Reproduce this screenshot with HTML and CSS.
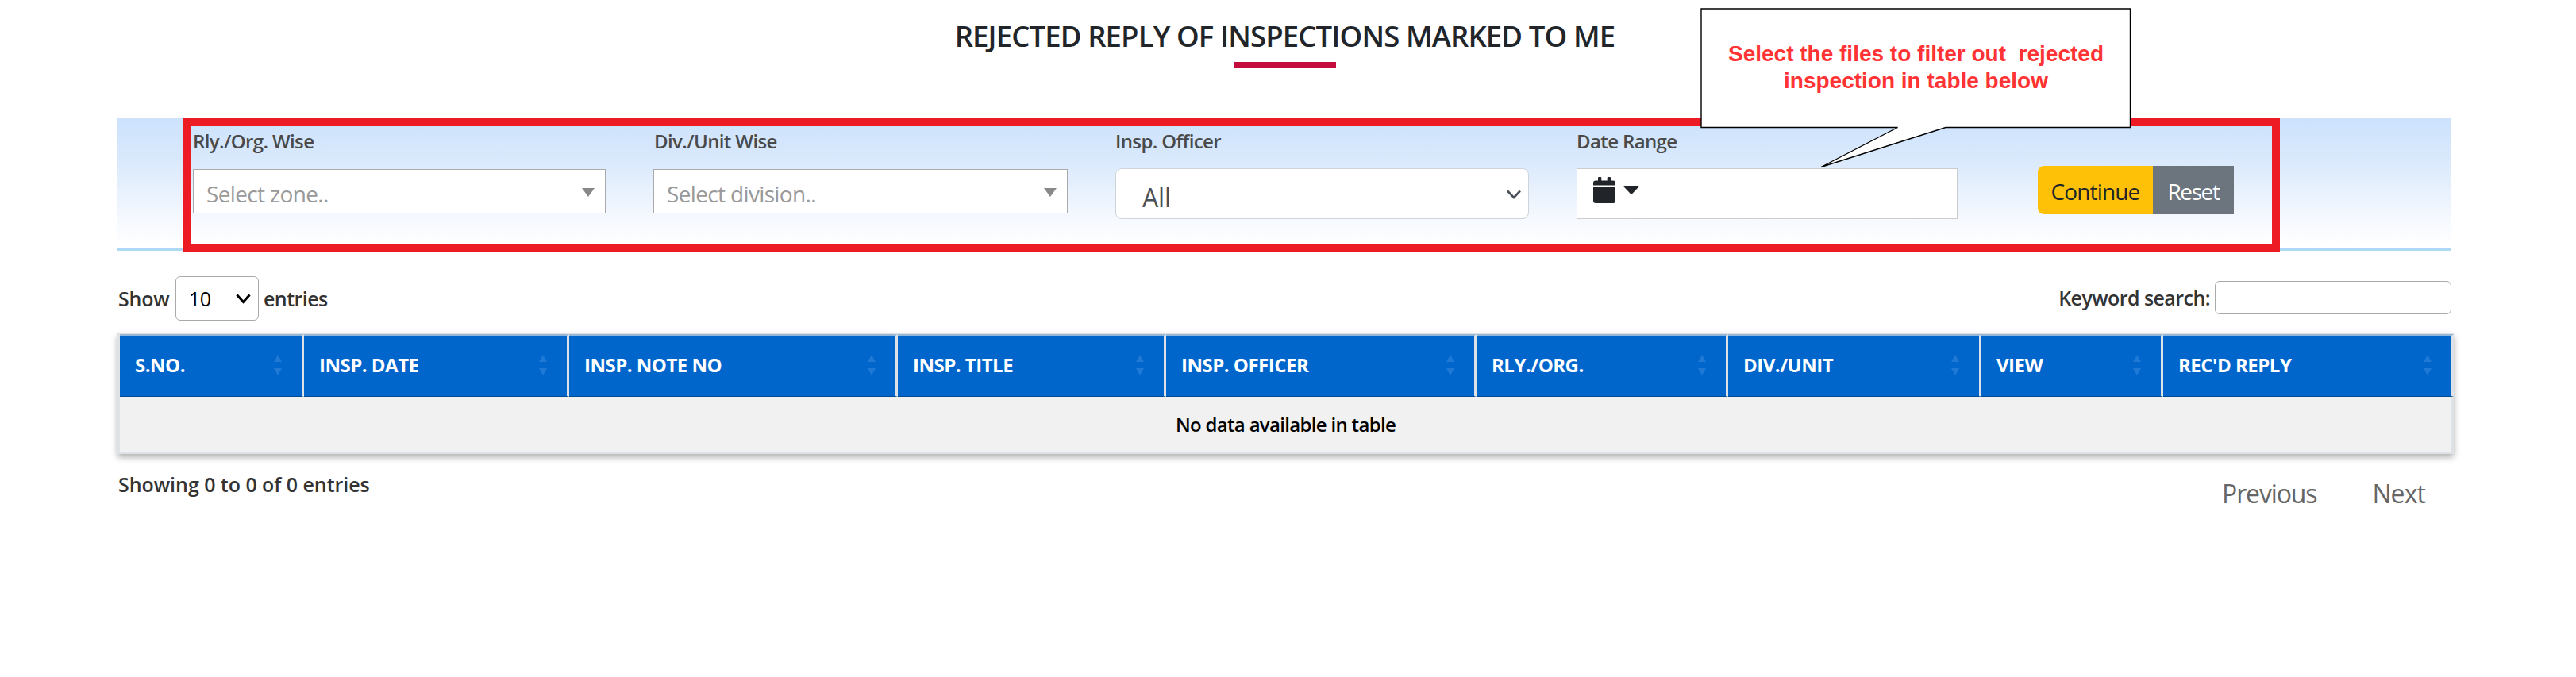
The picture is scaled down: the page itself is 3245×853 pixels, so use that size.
FILE: index.html
```html
<!DOCTYPE html>
<html lang="en">
<head>
<meta charset="utf-8">
<title>Rejected Reply of Inspections</title>
<link rel="stylesheet" href="styles.css">
</head>
<body>
<main class="page">
  <header class="page-head">
    <h1 class="title">REJECTED REPLY OF INSPECTIONS MARKED TO ME</h1>
    <div class="title-rule"></div>
  </header>

  <section class="filters">
    <div class="field">
      <div class="label">Rly./Org. Wise</div>
      <div class="combo"><span>Select zone..</span><svg class="tri" width="16" height="11" viewBox="0 0 16 11"><path d="M0 0h16L8 11z" fill="#888"/></svg></div>
    </div>
    <div class="field">
      <div class="label">Div./Unit Wise</div>
      <div class="combo combo-wide"><span>Select division..</span><svg class="tri" width="16" height="11" viewBox="0 0 16 11"><path d="M0 0h16L8 11z" fill="#888"/></svg></div>
    </div>
    <div class="field">
      <div class="label">Insp. Officer</div>
      <div class="select"><span>All</span><svg width="18" height="12" viewBox="0 0 18 12"><path d="M1 1.5l8 8.5 8-8.5" fill="none" stroke="#495057" stroke-width="2.6"/></svg></div>
    </div>
    <div class="field">
      <div class="label">Date Range</div>
      <div class="date">
        <svg width="28" height="33" viewBox="0 0 28 33"><path fill="#212529" d="M0 10.5V7.500Q0 4.500 3 4.500H6V1Q6 0 7 0H9.300Q10.300 0 10.300 1V4.500H17.700V1Q17.700 0 18.700 0H21Q22 0 22 1V4.500H25Q28 4.500 28 7.500V10.500ZM0 12.500H28V30Q28 33 25 33H3Q0 33 0 30Z"/></svg>
        <svg class="caret" width="20" height="11" viewBox="0 0 20 11"><path d="M1.500 0h17q1.500 0 .8 1.500L11 10.300q-1 1-2 0L.7 1.500Q0 0 1.500 0z" fill="#212529"/></svg>
      </div>
    </div>
    <div class="actions">
      <button class="btn btn-go" type="button">Continue</button><button class="btn btn-reset" type="button">Reset</button>
    </div>
  </section>

  <section class="tools">
    <div class="length">
      <span class="show">Show</span>
      <div class="length-box"><span>10</span><svg width="19" height="13" viewBox="0 0 19 13"><path d="M1.500 1.500l8 9 8-9" fill="none" stroke="#000" stroke-width="3"/></svg></div>
      <span>entries</span>
    </div>
    <div class="search"><span>Keyword search:</span><div class="search-box"></div></div>
  </section>

  <table class="grid">
    <colgroup><col class="c1"><col class="c2"><col class="c3"><col class="c4"><col class="c5"><col class="c6"><col class="c7"><col class="c8"><col class="c9"></colgroup>
    <thead>
      <tr>
        <th><div class="th"><span>S.NO.</span><i class="sort"></i></div></th>
        <th><div class="th"><span>INSP. DATE</span><i class="sort"></i></div></th>
        <th><div class="th"><span>INSP. NOTE NO</span><i class="sort"></i></div></th>
        <th><div class="th"><span>INSP. TITLE</span><i class="sort"></i></div></th>
        <th><div class="th"><span>INSP. OFFICER</span><i class="sort"></i></div></th>
        <th><div class="th"><span>RLY./ORG.</span><i class="sort"></i></div></th>
        <th><div class="th"><span>DIV./UNIT</span><i class="sort"></i></div></th>
        <th><div class="th"><span>VIEW</span><i class="sort"></i></div></th>
        <th><div class="th"><span>REC'D REPLY</span><i class="sort"></i></div></th>
      </tr>
    </thead>
    <tbody><tr><td colspan="9">No data available in table</td></tr></tbody>
  </table>

  <footer class="foot">
    <div class="info">Showing 0 to 0 of 0 entries</div>
    <nav class="pager"><span class="prev">Previous</span><span class="next">Next</span></nav>
  </footer>
</main>

<div class="frame"></div>
<div class="callout">
  <svg class="callout-shape" width="543" height="204" viewBox="0 0 543 204"><path d="M1 1H541.500V150.500H309L152 200.500 248.500 150.500H1Z" fill="#fff" stroke="#000" stroke-width="1.400"/></svg>
  <p class="callout-text">Select the files to filter out&nbsp; rejected<br>inspection in table below</p>
</div>
</body>
</html>
```

FILE: styles.css
```css
* { box-sizing: border-box; }
body {
  margin: 0;
  background: #fff;
  font-family: "Open Sans", "Noto Sans", sans-serif;
  color: #212529;
}
svg { display: block; }
.page { width: 2943px; margin-left: 148px; }

.page-head { height: 149px; padding: 20px 2px 0 0; text-align: center; }
.title { margin: 0; font-size: 36.5px; line-height: 50px; font-weight: 550; letter-spacing: -.87px; }
.title-rule { width: 128px; height: 8px; margin: 8px auto 0; background: #c40d3c; }

.filters {
  display: grid;
  grid-template-columns: repeat(4, 581px) 1fr;
  width: 2940px;
  height: 167px;
  padding: 12px 0 0 95px;
  border-bottom: 4px solid #afd7f6;
  background: linear-gradient(#cce2fd 0%, #dbeafc 35%, #f1f6fe 70%, #fff 98%);
}
.label { font-size: 24px; line-height: 34px; font-weight: 600; letter-spacing: -.62px; color: #4a4a4a; margin-bottom: 17px; }
.combo {
  display: flex;
  justify-content: space-between;
  width: 520px;
  height: 56px;
  margin-top: 18px;
  padding: 12px 13px 0 16px;
  border: 1.500px solid #aaa;
  background: #fff;
  color: #999;
  font-size: 28px;
  line-height: 36px;
  letter-spacing: -.65px;
}
.combo-wide { width: 522px; margin-left: -1px; }
.tri { margin-top: 11px; }
.select {
  display: flex;
  justify-content: space-between;
  width: 521px;
  height: 64px;
  padding: 13px 9px 0 33px;
  border: 1px solid #ced4da;
  border-radius: 8px;
  background: #fff;
  color: #495057;
  font-size: 32px;
  line-height: 46px;
  letter-spacing: -.2px;
}
.select svg { margin-top: 13px; }
.date { display: flex; width: 480px; height: 64px; padding: 10px 20px; border: 1.500px solid #ccc; background: #fff; }
.caret { margin: 11px 0 0 10px; }
.actions { display: flex; padding-top: 48px; }
.btn {
  height: 61px;
  padding: 3px 0 0;
  border: 0;
  font: 400 28px/40px "Open Sans", "Noto Sans", sans-serif;
}
.btn-go { width: 145px; border-radius: 8px 0 0 8px; background: #ffc107; color: #212529; letter-spacing: -.86px; }
.btn-reset { width: 102px; background: #6c757d; color: #fff; letter-spacing: -1.400px; }

.tools {
  display: flex;
  justify-content: space-between;
  width: 2940px;
  height: 104px;
  padding-top: 32px;
  color: #333;
  font-size: 25px;
  line-height: 36px;
  font-weight: 600;
  letter-spacing: -.56px;
}
.length { display: flex; align-items: center; height: 56px; }
.show { width: 73px; padding-left: 1px; letter-spacing: -.2px; }
.length-box {
  display: flex;
  align-items: center;
  justify-content: space-between;
  width: 105px;
  height: 56px;
  margin-right: 6px;
  padding: 0 9px 0 16px;
  border: 1.500px solid #aaa;
  border-radius: 6px;
  color: #000;
  font-weight: 400;
}
.search { display: flex; align-items: center; gap: 6px; height: 42px; margin-top: 6px; }
.search-box { width: 298px; height: 42px; border: 1.500px solid #aaa; border-radius: 6px; }

.grid {
  table-layout: fixed;
  width: 2943px;
  border-collapse: separate;
  border-spacing: 0;
  border: solid #dee2e6;
  border-width: 1px 0 2px 3px;
  box-shadow: 0 4px 8px rgba(0, 0, 0, .32);
}
.c1 { width: 232px; } .c2 { width: 334px; } .c3 { width: 414px; } .c4 { width: 338px; }
.c5 { width: 391px; } .c6 { width: 317px; } .c7 { width: 319px; } .c8 { width: 229px; } .c9 { width: 366px; }
th { height: 79px; padding: 0 0 2px; background: #0066cc; border-top: 2px solid #94b7d8; border-bottom: 1px solid #004a94; border-right: 3px solid #dee2e6; }
.th {
  display: flex;
  align-items: center;
  justify-content: space-between;
  padding: 0 25px 0 19px;
  color: #fff;
  font-size: 24px;
  line-height: 34px;
  font-weight: 700;
  letter-spacing: -.5px;
}
.sort { display: flex; flex-direction: column; gap: 8px; }
.sort::before, .sort::after { content: ""; border: solid transparent; border-width: 0 5.500px; }
.sort::before { border-bottom: 9px solid #1f79d5; }
.sort::after { border-top: 9px solid #1f79d5; }
td {
  height: 70px;
  padding: 0;
  background: #f1f1f1;
  border-right: 3px solid #dee2e6;
  text-align: center;
  color: #000;
  font-size: 24px;
  line-height: 34px;
  font-weight: 600;
  letter-spacing: -.68px;
}

.foot { display: flex; justify-content: space-between; padding: 20px 36px 0 1px; }
.info { color: #333; font-size: 25px; line-height: 36px; font-weight: 600; letter-spacing: -.04px; }
.pager { display: flex; gap: 70px; padding-top: 8px; color: #666; font-size: 32px; line-height: 44px; }
.prev { letter-spacing: -1.150px; }
.next { letter-spacing: -.9px; }

/* Annotation overlays */
.frame { position: absolute; left: 230px; top: 149px; width: 2642px; height: 169px; border: 10px solid #ed1c24; }
.callout { position: absolute; left: 2142px; top: 10px; width: 543px; }
.callout-shape { position: absolute; left: 0; top: 0; }
.callout-text {
  position: relative;
  margin: 0;
  padding-top: 41px;
  text-align: center;
  color: #ff3333;
  font: bold 28px/34px "Liberation Sans", Arial, sans-serif;
}
```
